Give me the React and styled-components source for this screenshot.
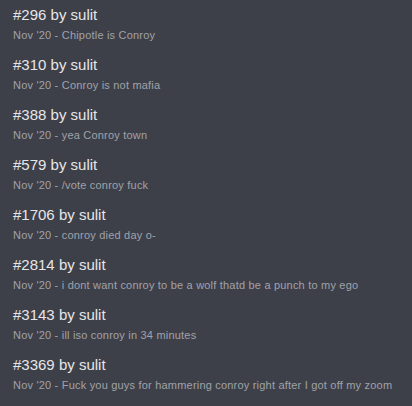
import React from "react";
import styled, { createGlobalStyle } from "styled-components";

const GlobalStyle = createGlobalStyle`
  html, body {
    margin: 0;
    padding: 0;
    background: #3e4049;
  }
`;

const List = styled.div`
  display: flex;
  flex-direction: column;
  width: 412px;
  height: 406px;
  padding-top: 5px;
  box-sizing: border-box;
  background: #3e4049;
  font-family: "Liberation Sans", Arial, sans-serif;
`;

const Item = styled.div`
  display: flex;
  flex-direction: column;
  height: 50px;
  padding: 0 12px 0 13px;
`;

const Title = styled.div`
  font-size: 15px;
  line-height: 20px;
  color: #e6e6e8;
`;

const Sub = styled.div`
  margin-top: 3px;
  font-size: 11px;
  line-height: 14px;
  letter-spacing: 0.2px;
  color: #a0a2a9;
  white-space: nowrap;
`;

const posts = [
  { num: 296, text: "Chipotle is Conroy" },
  { num: 310, text: "Conroy is not mafia" },
  { num: 388, text: "yea Conroy town" },
  { num: 579, text: "/vote conroy fuck" },
  { num: 1706, text: "conroy died day o-" },
  { num: 2814, text: "i dont want conroy to be a wolf thatd be a punch to my ego" },
  { num: 3143, text: "ill iso conroy in 34 minutes" },
  { num: 3369, text: "Fuck you guys for hammering conroy right after I got off my zoom" },
];

export default function App() {
  return (
    <>
      <GlobalStyle />
      <List>
        {posts.map((p) => (
          <Item key={p.num}>
            <Title>#{p.num} by sulit</Title>
            <Sub>Nov '20 - {p.text}</Sub>
          </Item>
        ))}
      </List>
    </>
  );
}
